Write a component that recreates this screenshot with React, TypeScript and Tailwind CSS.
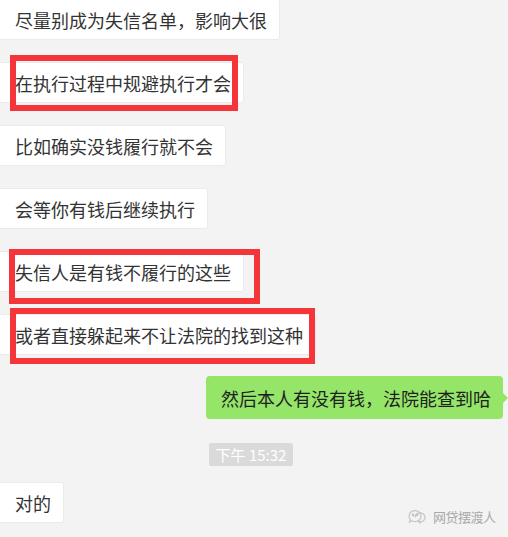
import React from "react";

const font = { fontFamily: '"Noto Sans CJK SC", "Microsoft YaHei", sans-serif' };

function Left({ text, mt, box }: { text: string; mt: string; box?: { top: number; left: number; w: number; h: number } }) {
  return (
    <div className={`relative flex ${mt}`}>
      <div className="h-[41px] flex items-center pl-[15px] pr-[12px] bg-white border border-l-0 border-[#ebebeb] rounded-r-[3px] text-[18px] text-[#333] whitespace-nowrap leading-none">
        {text}
      </div>
      {box && (
        <div
          className="absolute border-[6px] border-[#f4363b]"
          style={{ top: box.top, left: box.left, width: box.w, height: box.h }}
        />
      )}
    </div>
  );
}

export default function App() {
  return (
    <div className="relative w-[508px] h-[537px] overflow-hidden bg-[#f3f3f3]" style={font}>
      <div className="flex flex-col -mt-px">
        <Left text="尽量别成为失信名单，影响大很" mt="mt-0" />
        <Left text="在执行过程中规避执行才会" mt="mt-[22px]" box={{ top: -7, left: 10, w: 228, h: 56 }} />
        <Left text="比如确实没钱履行就不会" mt="mt-[22px]" />
        <Left text="会等你有钱后继续执行" mt="mt-[22px]" />
        <Left text="失信人是有钱不履行的这些" mt="mt-[22px]" box={{ top: -2, left: 9, w: 251, h: 55 }} />
        <Left text="或者直接躲起来不让法院的找到这种" mt="mt-[22px]" box={{ top: -6, left: 10, w: 305, h: 56 }} />
        <div className="flex justify-end mt-[21px] pr-[5px]">
          <div className="relative h-[43px] flex items-center pl-[15px] pr-[12px] bg-[#95e569] rounded-[4px] text-[18px] text-[#1f1f1f] whitespace-nowrap leading-none">
            然后本人有没有钱，法院能查到哈
            <div className="absolute right-[-5px] top-[17px] w-0 h-0 border-y-[5px] border-y-transparent border-l-[5px] border-l-[#95e569]" />
          </div>
        </div>
        <div className="flex justify-center mt-[24px] pr-[6px]">
          <div className="h-[23px] px-[7px] flex items-center bg-[#dadada] rounded-[2px] text-white text-[15px] leading-none">
            下午 15:32
          </div>
        </div>
        <Left text="对的" mt="mt-[16px]" />
      </div>
      <div className="absolute left-[405px] top-[507px] flex items-center gap-[6px] text-[#a9a9a9] text-[12px] leading-none">
        <svg width="22" height="18" viewBox="0 0 22 18" fill="none" stroke="#c4c4c4" strokeWidth="1.2">
          <path d="M4 9a6 5.5 0 1 1 3 4.8L4.5 15l0.8-2.6A5.5 5 0 0 1 4 9z" />
          <path d="M10 10.5a5 4.5 0 1 1 3 4l2 1.2-0.6-2" />
          <circle cx="8" cy="8" r="0.8" fill="#c4c4c4" />
          <circle cx="12" cy="8" r="0.8" fill="#c4c4c4" />
        </svg>
        <span className="text-[13px] tracking-[-0.5px]">网贷摆渡人</span>
      </div>
    </div>
  );
}
